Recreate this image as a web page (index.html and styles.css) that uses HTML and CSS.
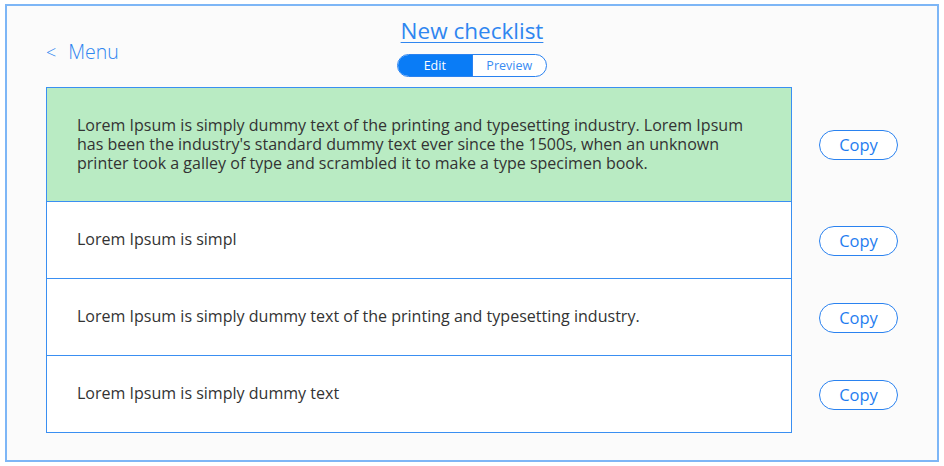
FILE: index.html
```html
<!DOCTYPE html>
<html lang="en">
<head>
<meta charset="utf-8">
<title>New checklist</title>
<link rel="stylesheet" href="styles.css">
</head>
<body>
<div class="frame">
  <header class="header">
    <a class="menu" href="#"><span class="chev">&lt;</span><span>Menu</span></a>
    <div class="center">
      <h1 class="title">New checklist</h1>
      <div class="seg">
        <span class="seg-btn active">Edit</span>
        <span class="seg-btn">Preview</span>
      </div>
    </div>
    <div></div>
  </header>
  <main class="list">
    <div class="row">
      <div class="cell first done"><p>Lorem Ipsum is simply dummy text of the printing and typesetting industry. Lorem Ipsum has been the industry's standard dummy text ever since the 1500s, when an unknown printer took a galley of type and scrambled it to make a type specimen book.</p></div>
      <div class="side"><button class="copy">Copy</button></div>
    </div>
    <div class="row">
      <div class="cell"><p>Lorem Ipsum is simpl</p></div>
      <div class="side"><button class="copy">Copy</button></div>
    </div>
    <div class="row">
      <div class="cell"><p>Lorem Ipsum is simply dummy text of the printing and typesetting industry.</p></div>
      <div class="side"><button class="copy">Copy</button></div>
    </div>
    <div class="row">
      <div class="cell"><p>Lorem Ipsum is simply dummy text</p></div>
      <div class="side"><button class="copy">Copy</button></div>
    </div>
  </main>
</div>
</body>
</html>
```
FILE: styles.css
```css
* { box-sizing: border-box; }
html, body { margin: 0; padding: 0; background: #ffffff; }
body { font-family: "Open Sans", "Noto Sans", sans-serif; }

.frame {
  margin: 4px 0 0 5px;
  width: 934px;
  height: 458px;
  border: 2px solid #7db6f6;
  background: #fbfbfb;
}

.header {
  display: grid;
  grid-template-columns: 1fr auto 1fr;
  height: 81px;
}

.menu {
  display: flex;
  align-items: center;
  gap: 12px;
  align-self: start;
  margin: 33px 0 0 39px;
  color: #2f86f0;
  font-size: 19.5px;
  font-weight: 300;
  text-decoration: none;
  line-height: 26px;
}
.chev { font-size: 18px; }

.center {
  display: flex;
  flex-direction: column;
  align-items: center;
}
.title {
  margin: 10px 0 0;
  font-size: 22.5px;
  font-weight: 400;
  line-height: 29px;
  color: #2f86f0;
  text-decoration: underline;
  text-decoration-thickness: 1px;
  text-underline-offset: 3px;
}
.seg {
  display: flex;
  margin-top: 9px;
  width: 150px;
  height: 23px;
  border: 1.5px solid #2a82f0;
  border-radius: 11.5px;
  overflow: hidden;
  background: #fff;
}
.seg-btn {
  flex: 1;
  display: flex;
  align-items: center;
  justify-content: center;
  font-size: 12.5px;
  color: #3a8cf2;
}
.seg-btn.active { background: #0a7cf6; color: #ffffff; }
.seg-btn + .seg-btn { border-left: 1px solid #2a82f0; }

.list {
  display: flex;
  flex-direction: column;
  padding-left: 39px;
}
.row {
  display: flex;
  align-items: stretch;
}
.cell {
  width: 746px;
  height: 77px;
  border: 1px solid #3a8ff2;
  border-top: none;
  background: #ffffff;
  display: flex;
  align-items: center;
  padding: 0 30px 1px 30px;
}
.cell.first { border-top: 1px solid #3a8ff2; height: 115px; padding-bottom: 0; }
.cell.done { background: #b9ebc3; }
.cell p {
  margin: 0;
  max-width: 684px;
  font-size: 16.05px;
  line-height: 19px;
  color: #333333;
}
.side {
  flex: 1;
  display: flex;
  align-items: center;
  padding-left: 27px;
}
.copy {
  width: 79px;
  height: 30px;
  border: 1px solid #2a82f0;
  border-radius: 15px;
  background: #ffffff;
  color: #1f7df0;
  font-family: "Open Sans", "Noto Sans", sans-serif;
  font-size: 16.5px;
  padding: 0;
}
```
